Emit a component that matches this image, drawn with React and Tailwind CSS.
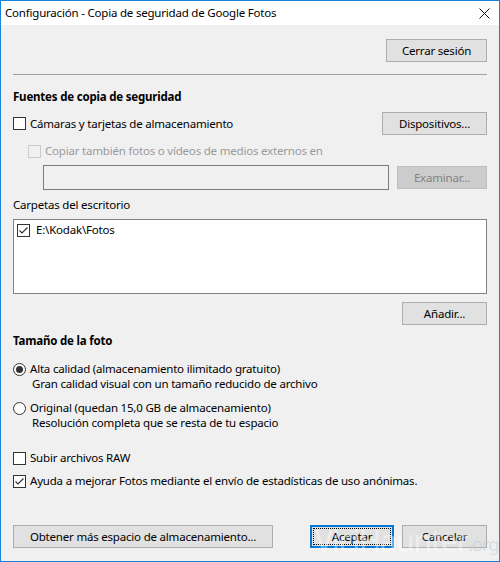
import React from 'react';

const FONT = { fontFamily: '"Noto Sans", "Open Sans", sans-serif' };

function Check({ checked, disabled }) {
  return (
    <span
      className={
        'w-[13px] h-[13px] shrink-0 border flex items-center justify-center ' +
        (disabled ? 'border-[#cccccc] bg-[#f0f0f0]' : 'border-[#333333] bg-white')
      }
    >
      {checked && (
        <svg width="11" height="11" viewBox="0 0 11 11">
          <path d="M1.5 5.5 L4 8 L9.5 2.5" fill="none" stroke="#333" strokeWidth="1.2" />
        </svg>
      )}
    </span>
  );
}

function Radio({ checked }) {
  return (
    <span className="w-[13px] h-[13px] shrink-0 rounded-full border border-[#333333] bg-white flex items-center justify-center">
      {checked && <span className="w-[7px] h-[7px] rounded-full bg-[#333333]" />}
    </span>
  );
}

function Btn({ children, className = '', disabled }) {
  return (
    <div
      className={
        'h-[23px] flex items-center justify-center border ' +
        (disabled
          ? 'bg-[#cccccc] border-[#bfbfbf] text-[#838383] '
          : 'bg-[#e1e1e1] border-[#adadad] text-black ') +
        className
      }
    >
      {children}
    </div>
  );
}

export default function App() {
  return (
    <div
      className="w-[500px] h-[562px] border border-[#1a83d9] bg-[#f0f0f0] flex flex-col relative overflow-hidden text-[11.5px] tracking-[-0.2px] text-black"
      style={FONT}
    >
      {/* barra de titulo */}
      <div className="h-[24px] bg-white flex items-center justify-between pl-[4px] pr-[9px]">
        <span className="leading-[16px]">Configuración - Copia de seguridad de Google Fotos</span>
        <svg width="11" height="11" viewBox="0 0 11 11">
          <path d="M0.5 0.5 L10.5 10.5 M10.5 0.5 L0.5 10.5" stroke="#111" strokeWidth="1" />
        </svg>
      </div>

      <div className="flex flex-col px-[12px] leading-[16px]">
        <div className="flex justify-end mt-[14px]">
          <Btn className="w-[101px]">Cerrar sesión</Btn>
        </div>
        <div className="h-px bg-[#a0a0a0] mt-[12px]" />

        <div className="font-bold mt-[14px]">Fuentes de copia de seguridad</div>

        <div className="flex items-center justify-between mt-[7px]">
          <div className="flex items-center gap-[4px]">
            <Check />
            <span>Cámaras y tarjetas de almacenamiento</span>
          </div>
          <Btn className="w-[105px]">Dispositivos...</Btn>
        </div>

        <div className="flex items-center gap-[4px] ml-[15px] mt-[8px] text-[#9a9a9a]">
          <Check disabled />
          <span>Copiar también fotos o vídeos de medios externos en</span>
        </div>

        <div className="flex items-center gap-[8px] ml-[30px] mt-[6px]">
          <div className="h-[25px] flex-1 bg-[#f0f0f0] border border-[#7a7a7a]" />
          <Btn disabled className="w-[90px]">Examinar...</Btn>
        </div>

        <div className="mt-[7px]">Carpetas del escritorio</div>
        <div className="h-[75px] mt-[6px] bg-white border border-[#828282] pt-[2px] pl-[3px]">
          <div className="flex items-center gap-[6px]">
            <Check checked />
            <span>E:\Kodak\Fotos</span>
          </div>
        </div>

        <div className="flex justify-end mt-[8px]">
          <Btn className="w-[85px]">Añadir...</Btn>
        </div>

        <div className="font-bold mt-[8px]">Tamaño de la foto</div>

        <div className="flex items-center gap-[4px] mt-[12px]">
          <Radio checked />
          <span>Alta calidad (almacenamiento ilimitado gratuito)</span>
        </div>
        <div className="pl-[19px] leading-[14px]">Gran calidad visual con un tamaño reducido de archivo</div>

        <div className="flex items-center gap-[4px] mt-[9px]">
          <Radio />
          <span>Original (quedan 15,0 GB de almacenamiento)</span>
        </div>
        <div className="pl-[19px] leading-[14px]">Resolución completa que se resta de tu espacio</div>

        <div className="flex items-center gap-[4px] mt-[20px]">
          <Check />
          <span>Subir archivos RAW</span>
        </div>
        <div className="flex items-center gap-[4px] mt-[7px]">
          <Check checked />
          <span>Ayuda a mejorar Fotos mediante el envío de estadísticas de uso anónimas.</span>
        </div>

        <div className="flex items-center mt-[36px]">
          <Btn className="w-[260px]">Obtener más espacio de almacenamiento...</Btn>
          <div className="ml-[37px] w-[84px] h-[23px] border-2 border-[#0078d7] bg-[#e1e1e1] p-[1px]">
            <div className="w-full h-full border border-dotted border-black flex items-center justify-center">
              Aceptar
            </div>
          </div>
          <Btn className="ml-[8px] w-[85px]">Cancelar</Btn>
        </div>
      </div>

      {/* marca de agua */}
      <div className="absolute left-[314px] top-[524px] flex items-end pointer-events-none text-white opacity-40 tracking-[-1px]">
        <span className="text-[30px] leading-[32px]">ViciHaunter</span>
        <span className="text-[18px] leading-[26px] text-[#b8c4d0]">.org</span>
      </div>
    </div>
  );
}
